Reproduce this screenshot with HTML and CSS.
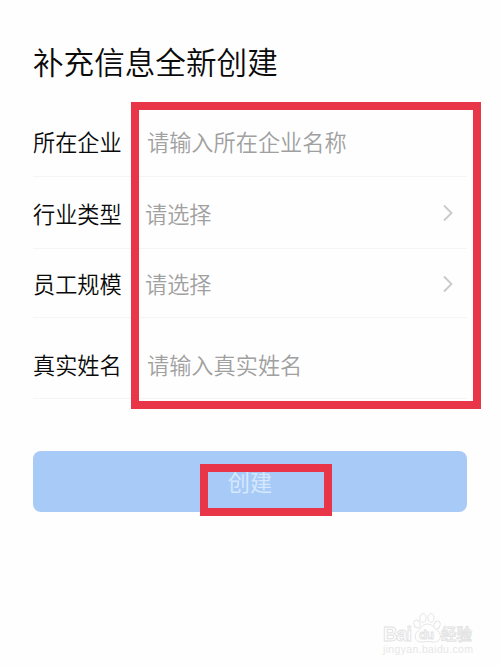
FILE: index.html
```html
<!DOCTYPE html>
<html lang="zh-CN">
<head>
<meta charset="utf-8">
<title>补充信息全新创建</title>
<link rel="stylesheet" href="styles.css">
</head>
<body>
<main class="page">
  <h1 class="title">补充信息全新创建</h1>
  <form class="form">
    <div class="row row-first"><span class="label">所在企业</span><span class="value">请输入所在企业名称</span></div>
    <div class="row row-industry"><span class="label">行业类型</span><span class="value select">请选择</span><svg class="chevron" viewBox="0 0 12 18"><path d="M2 1.5 9.5 9 2 16.5"/></svg></div>
    <div class="row row-size"><span class="label">员工规模</span><span class="value select">请选择</span><svg class="chevron" viewBox="0 0 12 18"><path d="M2 1.5 9.5 9 2 16.5"/></svg></div>
    <div class="row row-name"><span class="label">真实姓名</span><span class="value">请输入真实姓名</span></div>
  </form>
  <div class="submit">创建</div>
  <div class="mark mark-form"></div>
  <div class="mark mark-submit"></div>
  <svg class="watermark" viewBox="0 0 100 50">
    <g class="paw">
      <ellipse cx="37" cy="13" rx="3" ry="4" transform="rotate(-20 37 13)"/>
      <ellipse cx="43" cy="7" rx="3" ry="4.3"/>
      <ellipse cx="51" cy="7" rx="3" ry="4.3"/>
      <ellipse cx="57" cy="14" rx="3" ry="4" transform="rotate(20 57 14)"/>
      <path d="M47 13c-5 0-6 5-9 7-5 4-3 11 3 11 4 0 8-1 12 0 7 1 10-6 5-11-4-3-6-7-11-7z"/>
    </g>
    <text class="brand" x="3" y="30" textLength="29">Bai</text>
    <text class="brand du" x="39" y="28" textLength="15">du</text>
    <text class="brand cn" x="61" y="29" textLength="31">经验</text>
    <text class="url" x="3" y="42" textLength="90">jingyan.baidu.com</text>
  </svg>
</main>
</body>
</html>
```
FILE: styles.css
```css
* { box-sizing: border-box; }
body {
  margin: 0;
  background: #fefefe;
  font-family: "Noto Sans CJK SC", sans-serif;
}
.page {
  position: relative;
  height: 666px;
  padding: 39px 33px 0;
  overflow: hidden;
}
.title {
  margin: 0;
  height: 70px;
  font-size: 30.6px;
  line-height: 45px;
  font-weight: 350;
  color: #0a0a0a;
  white-space: nowrap;
}
.row {
  display: flex;
  align-items: center;
  border-bottom: 1px solid #f5f5f5;
  font-size: 22.2px;
  line-height: 32px;
  white-space: nowrap;
}
.row-first { height: 68px; padding-bottom: 3px; }
.row-industry { height: 72px; }
.row-size { height: 69px; }
.row-name { height: 81px; padding-top: 11px; }
.label { width: 114px; color: #0a0a0a; font-weight: 350; }
.value { flex: 1; color: #a0a0a0; font-weight: 350; }
.select { margin-left: -2px; }
.chevron {
  width: 12px;
  height: 18px;
  margin: 1px 13px 0 0;
  fill: none;
  stroke: #c9c9c9;
  stroke-width: 1.8;
}
.submit {
  height: 61px;
  margin-top: 52px;
  border-radius: 8px;
  background: #a8caf7;
  color: #d5e8fd;
  font-size: 22.2px;
  line-height: 61px;
  text-align: center;
}
.mark {
  position: absolute;
  border: 8px solid #e83648;
}
.mark-form { left: 131px; top: 102px; width: 350px; height: 307px; }
.mark-submit { left: 200px; top: 464px; width: 132px; height: 52px; }
.watermark {
  position: absolute;
  left: 380px;
  top: 611px;
  width: 100px;
  height: 50px;
}
.paw { fill: #fefefe; stroke: #e6e6e6; stroke-width: 1; }
.brand {
  font: 700 20px "Liberation Sans", sans-serif;
  fill: #fefefe;
  stroke: #e2e2e2;
  stroke-width: 0.9;
}
.du { font-size: 13px; }
.cn { font: 500 15.5px "Noto Sans CJK SC", sans-serif; }
.url { font: 10.5px "Liberation Sans", sans-serif; fill: #e6e6e6; }
```
